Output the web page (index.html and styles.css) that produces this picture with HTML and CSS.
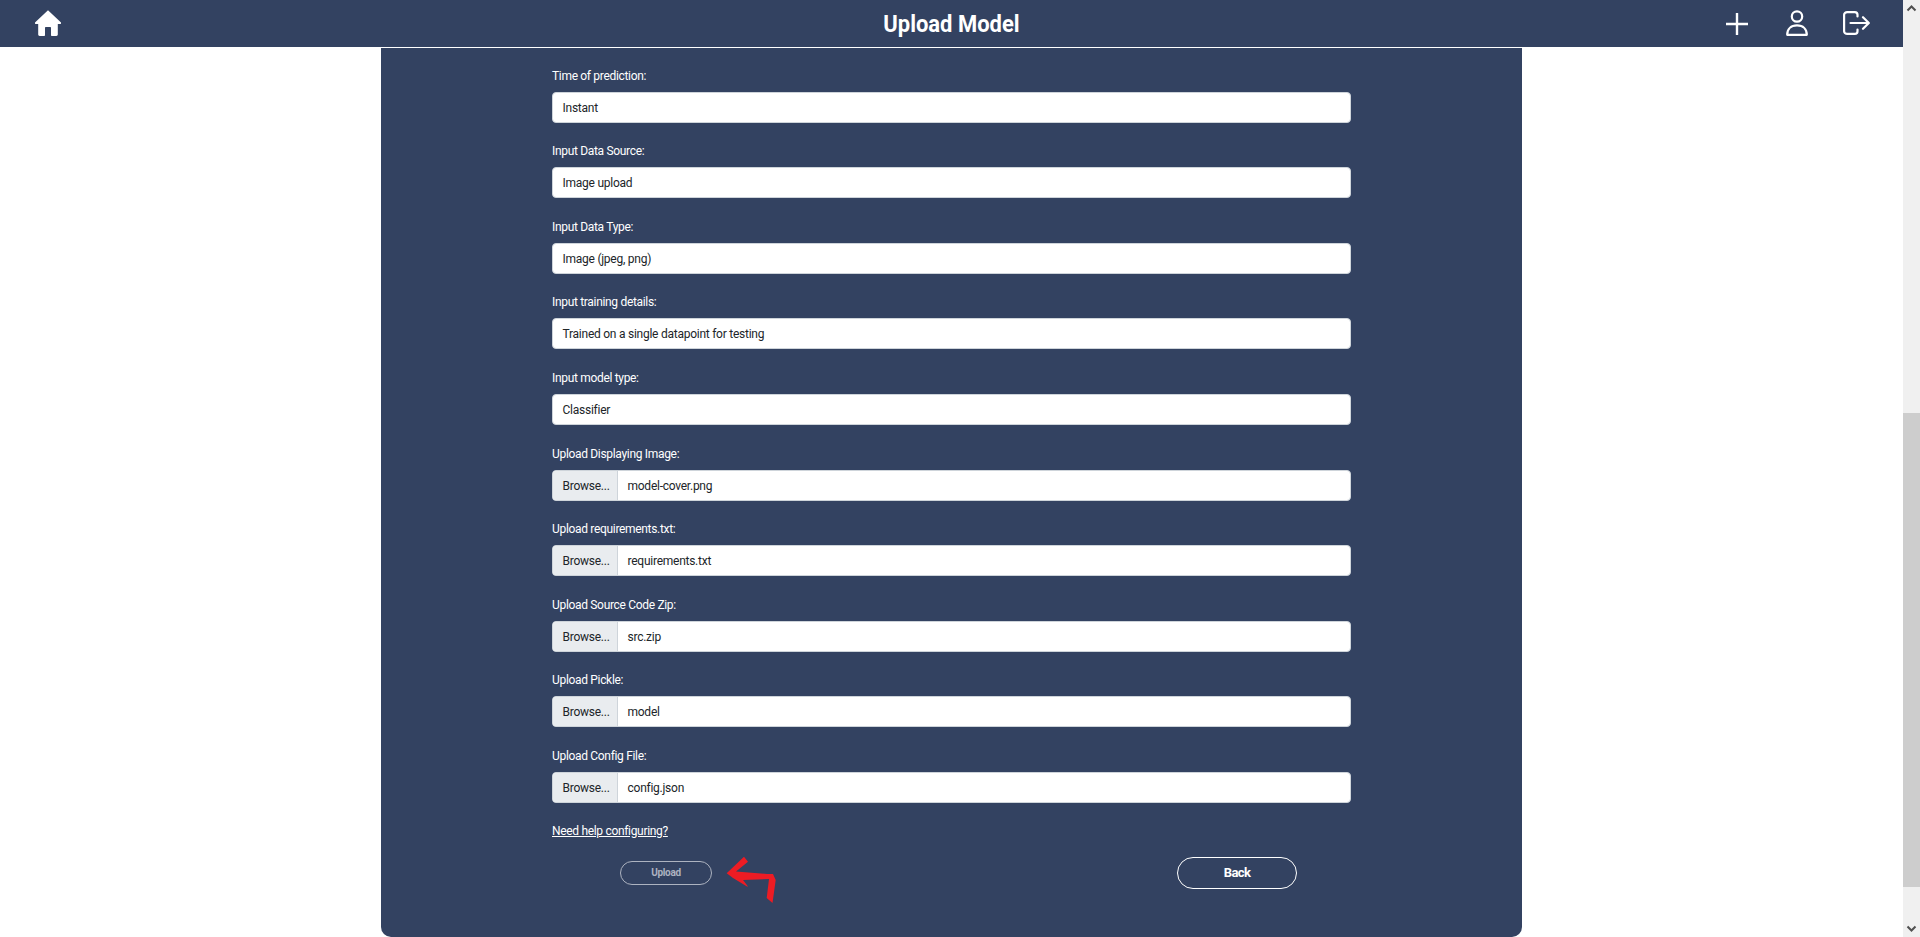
FILE: index.html
```html
<!DOCTYPE html>
<html lang="en">
<head>
<meta charset="utf-8">
<title>Upload Model</title>
<link rel="stylesheet" href="styles.css">
</head>
<body>
<div class="viewport">
  <div class="page">
    <header class="topbar">
      <svg class="home" viewBox="0 0 26 26" width="26" height="26"><path fill="#fff" d="M13 0.2 L26 12.6 C26.3 13.4 25.8 14 25 14 H22.8 V24.6 C22.8 25.4 22.2 26 21.4 26 H17 C16.4 26 16 25.6 16 25 V18 C16 17.4 15.6 17 15 17 H11 C10.4 17 10 17.4 10 18 V25 C10 25.6 9.6 26 9 26 H4.6 C3.8 26 3.2 25.4 3.2 24.6 V14 H1 C0.2 14 -0.3 13.4 0 12.6 Z"/></svg>
      <h1 class="title">Upload Model</h1>
      <nav class="actions">
        <svg class="plus" viewBox="0 0 22 22" width="22" height="22"><path d="M11 0.5V21.5M0.5 11H21.5" stroke="#fff" stroke-width="2.4" stroke-linecap="round" fill="none"/></svg>
        <svg class="user" viewBox="0 0 22 26" width="22" height="26"><g fill="none" stroke="#fff" stroke-width="2.2"><circle cx="11" cy="6.5" r="5.2"/><path d="M1.2 24.8C1.2 19 5 15.4 11 15.4S20.8 19 20.8 24.8Z" stroke-linejoin="round"/></g></svg>
        <svg class="logout" viewBox="0 0 27 24" width="27" height="24"><g fill="none" stroke="#fff" stroke-width="2.2" stroke-linecap="round" stroke-linejoin="round"><path d="M14.5 5.5V3.8C14.5 2.2 13.3 1.1 11.8 1.1H4.2C2.6 1.1 1.1 2.2 1.1 3.8V20.2C1.1 21.8 2.6 22.9 4.2 22.9H11.8C13.3 22.9 14.5 21.8 14.5 20.2V18.5"/><path d="M7.5 12H25.6M20 6.2L25.8 12L20 17.8"/></g></svg>
      </nav>
    </header>
    <main class="card">
      <form class="form">
        <div class="field"><div class="label">Time of prediction:</div><div class="input">Instant</div></div>
        <div class="field"><div class="label">Input Data Source:</div><div class="input">Image upload</div></div>
        <div class="field"><div class="label">Input Data Type:</div><div class="input">Image (jpeg, png)</div></div>
        <div class="field"><div class="label">Input training details:</div><div class="input">Trained on a single datapoint for testing</div></div>
        <div class="field"><div class="label">Input model type:</div><div class="input">Classifier</div></div>
        <div class="field"><div class="label">Upload Displaying Image:</div><div class="input file"><span class="browse">Browse...</span><span class="fname">model-cover.png</span></div></div>
        <div class="field"><div class="label">Upload requirements.txt:</div><div class="input file"><span class="browse">Browse...</span><span class="fname">requirements.txt</span></div></div>
        <div class="field"><div class="label">Upload Source Code Zip:</div><div class="input file"><span class="browse">Browse...</span><span class="fname">src.zip</span></div></div>
        <div class="field"><div class="label">Upload Pickle:</div><div class="input file"><span class="browse">Browse...</span><span class="fname">model</span></div></div>
        <div class="field"><div class="label">Upload Config File:</div><div class="input file"><span class="browse">Browse...</span><span class="fname">config.json</span></div></div>
        <a class="help" href="#">Need help configuring?</a>
        <div class="buttons">
          <div class="cell"><button class="btn btn-upload" type="button">Upload</button></div>
          <div class="cell"><button class="btn btn-back" type="button">Back</button></div>
        </div>
      </form>
    </main>
    <svg class="arrow" viewBox="0 0 60 50" width="60" height="50"><path fill="#ed1c24" d="M3.7 18.3L21 1.7L25 6.7L13 16.5L44 19L50 19L52.7 25L49.5 48L46 45L43.7 43L46 24L20 25L25 31.5L24 31.5L10 23Z"/></svg>
  </div>
  <div class="scrollbar" aria-hidden="true">
    <div class="sb-btn"><svg viewBox="0 0 17 17" width="17" height="17"><path d="M4.5 10.5L8.5 6.5L12.5 10.5" fill="none" stroke="#505050" stroke-width="2"/></svg></div>
    <div class="sb-track"><div class="sb-thumb"></div></div>
    <div class="sb-btn"><svg viewBox="0 0 17 17" width="17" height="17"><path d="M4.5 6.5L8.5 10.5L12.5 6.5" fill="none" stroke="#505050" stroke-width="2"/></svg></div>
  </div>
</div>
</body>
</html>
```

FILE: styles.css
```css
* { box-sizing: border-box; }
html, body { margin: 0; height: 100%; overflow: hidden; background: #fff; }
body { font-family: Roboto, "Liberation Sans", sans-serif; font-size: 12px; color: #212529; letter-spacing: -0.25px; }

.viewport { display: flex; height: 937px; width: 1920px; }
.page { position: relative; flex: 1; min-width: 0; display: flex; flex-direction: column; overflow: hidden; }

.topbar {
  position: relative;
  flex: none;
  height: 47px;
  background: #334261;
  display: flex;
  align-items: center;
  justify-content: center;
  margin-bottom: 1px;
}
.home { position: absolute; left: 35px; top: 10px; }
.title { margin: 0; font-size: 24px; font-weight: 700; color: #fff; letter-spacing: 0; transform: scaleX(0.915); }
.actions { position: absolute; right: 33px; top: 0; height: 47px; display: flex; align-items: center; gap: 38px; }
.user { margin-top: -1px; }
.logout { margin-left: -3px; margin-top: -1px; }

.card {
  flex: 1;
  width: 1141px;
  margin: 0 auto;
  padding-top: 17.7px;
  background: #334261;
  border-radius: 0 0 10px 10px;
}
.form { width: 799px; margin: 0 auto; }
.field { margin-bottom: 18.6px; }
.label { height: 18px; line-height: 20px; margin-bottom: 8px; color: #fff; letter-spacing: -0.32px; }
.input {
  height: 31px;
  line-height: 30px;
  padding-left: 9.5px;
  background: #fff;
  border: 1px solid #ced4da;
  border-radius: 4px;
  color: #212529;
}
.input.file { display: flex; padding-left: 0; overflow: hidden; }
.browse { width: 65px; padding-left: 9.5px; background: #e9ecef; border-right: 1px solid #ced4da; }
.fname { padding-left: 9.5px; }

.help { display: block; width: max-content; height: 18px; line-height: 18px; color: #fff; text-decoration: underline; letter-spacing: -0.32px; }

.buttons { display: grid; grid-template-columns: 228px 1fr 228px; margin-top: 17.3px; height: 32px; }
.cell { display: flex; align-items: center; justify-content: center; }
.cell:last-child { grid-column: 3; }
.btn { background: transparent; font-family: inherit; font-weight: 700; padding: 0; letter-spacing: -0.3px; }
.btn-upload { width: 92px; height: 24px; font-size: 10px; color: #adb3c0; border: 1px solid #adb3c0; border-radius: 12px; }
.btn-back { width: 120px; height: 32px; font-size: 13px; color: #fff; border: 1px solid #fff; border-radius: 16px; letter-spacing: -0.6px; }

.arrow { position: absolute; left: 723px; top: 855px; }

.scrollbar { flex: none; width: 17px; display: flex; flex-direction: column; background: #f0f0f0; }
.sb-btn { flex: none; height: 17px; }
.sb-btn svg { display: block; }
.sb-track { flex: 1; padding-top: 396px; padding-bottom: 33px; }
.sb-thumb { height: 100%; background: #cdcdcd; }
```
